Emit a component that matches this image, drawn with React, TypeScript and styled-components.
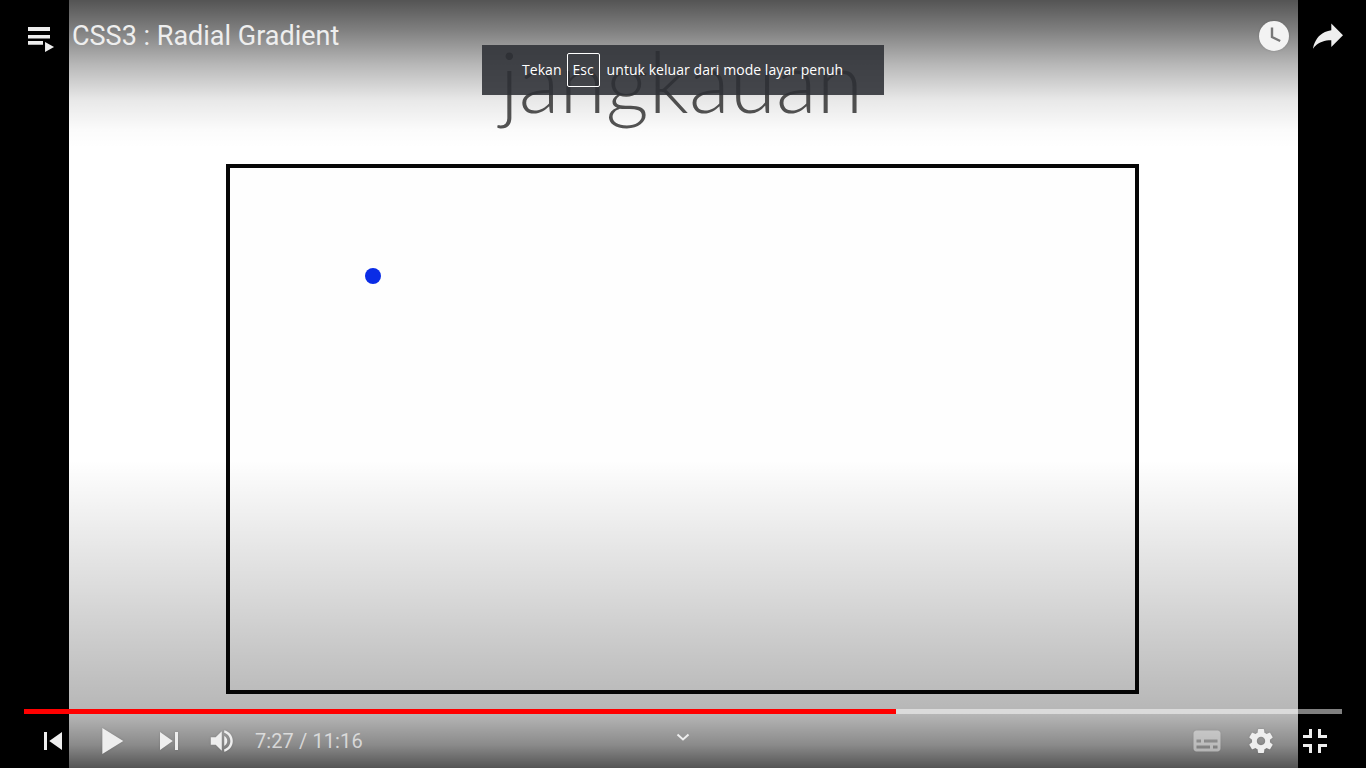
import { FC, ReactNode } from "react";
import styled, { createGlobalStyle } from "styled-components";

const GlobalStyle = createGlobalStyle`
	html, body {
		margin: 0;
		padding: 0;
		width: 100%;
		height: 100%;
		overflow: hidden;
		background: #000;
		font-family: "Roboto", "Liberation Sans", sans-serif;
	}
`;

const Player = styled.div`
	position: relative;
	display: flex;
	width: 1366px;
	height: 768px;
	overflow: hidden;
	background: #000;
`;

const Pillar = styled.div`
	flex: 0 0 ${(props: { $width: number }) => props.$width}px;
	background: #000;
`;

const Frame = styled.div`
	flex: 1;
	display: flex;
	flex-direction: column;
	background: #fff;
`;

const SlideTitle = styled.div`
	height: 164px;
	box-sizing: border-box;
	padding: 29px 0 0 431px;
	font-family: "Lato", "Open Sans", sans-serif;
	font-weight: 300;
	font-size: 84px;
	line-height: 104px;
	letter-spacing: 0.1px;
	color: #555;
	filter: blur(0.6px);
`;

const Canvas = styled.div`
	position: relative;
	box-sizing: border-box;
	width: 913px;
	height: 530px;
	margin-left: 157px;
	border: 4px solid #060606;
	background: #fefefe;
	filter: blur(0.6px);
`;

const Dot = styled.div`
	position: absolute;
	left: 135px;
	top: 100px;
	width: 16px;
	height: 16px;
	border-radius: 50%;
	background: #0a2ce6;
`;

const TopScrim = styled.div`
	position: absolute;
	top: 0;
	left: 0;
	right: 0;
	height: 148px;
	background: linear-gradient(
		to bottom,
		rgba(0, 0, 0, 0.67) 0,
		rgba(0, 0, 0, 0.5) 30px,
		rgba(0, 0, 0, 0.28) 65px,
		rgba(0, 0, 0, 0.09) 100px,
		rgba(0, 0, 0, 0.015) 130px,
		rgba(0, 0, 0, 0) 148px
	);
`;

const BottomScrim = styled.div`
	position: absolute;
	bottom: 0;
	left: 0;
	right: 0;
	height: 308px;
	background: linear-gradient(
		to bottom,
		rgba(0, 0, 0, 0) 0,
		rgba(0, 0, 0, 0.14) 130px,
		rgba(0, 0, 0, 0.29) 255px,
		rgba(0, 0, 0, 0.46) 285px,
		rgba(0, 0, 0, 0.67) 308px
	);
`;

const TopBar = styled.div`
	position: absolute;
	top: 0;
	left: 0;
	right: 0;
	height: 72px;
	display: flex;
	align-items: center;
	padding-left: 14px;
	padding-right: 11px;
`;

const VideoTitle = styled.div`
	flex: 1;
	margin-left: 4px;
	font-size: 27px;
	line-height: 36px;
	color: #eee;
`;

const Toast = styled.div`
	position: absolute;
	top: 45px;
	left: 482px;
	width: 402px;
	height: 50px;
	box-sizing: border-box;
	padding-left: 40px;
	display: flex;
	align-items: center;
	gap: 5px;
	background: rgba(45, 48, 53, 0.88);
	font-family: "Open Sans", "Noto Sans", sans-serif;
	font-size: 14px;
	letter-spacing: 0.06px;
	color: #fff;
	white-space: nowrap;
`;

const ToastText = styled.span`
	padding-bottom: 2px;
`;

const Key = styled.span`
	display: flex;
	align-items: center;
	justify-content: center;
	width: 33px;
	height: 34px;
	box-sizing: border-box;
	margin-right: 2px;
	padding-bottom: 2px;
	border: 1px solid #fff;
	border-radius: 2px;
`;

const Controls = styled.div`
	position: absolute;
	left: 0;
	right: 0;
	bottom: 0;
	padding: 0 24px;
	display: flex;
	flex-direction: column;
`;

const Progress = styled.div`
	height: 5px;
	background: rgba(255, 255, 255, 0.5);
`;

const Played = styled.div`
	height: 100%;
	background: #f00;
`;

const ControlRow = styled.div`
	height: 54px;
	display: flex;
	align-items: center;
`;

const IconSlot = styled.div<{ $width?: number; $dim?: boolean }>`
	flex: 0 0 ${(props) => props.$width ?? 54}px;
	height: 54px;
	display: flex;
	align-items: center;
	justify-content: center;
	opacity: ${(props) => (props.$dim ? 0.5 : 1)};
	filter: drop-shadow(0 0 1px rgba(0, 0, 0, 0.15));
`;

const TimeLabel = styled.div`
	flex: 1;
	margin-left: 5px;
	font-size: 20px;
	letter-spacing: 0.1px;
	color: rgba(255, 255, 255, 0.66);
`;

const Chevron = styled.div`
	position: absolute;
	left: 675px;
	bottom: 26px;
	display: flex;
	width: 16px;
	height: 10px;
`;

const Icon: FC<{ size?: number; box?: number; children: ReactNode }> = ({ size = 54, box = 36, children }) => (
	<svg width={size} height={size} viewBox={`0 0 ${box} ${box}`} fill="#eee" style={{ flex: "none" }}>
		{children}
	</svg>
);

const TOTAL_SECONDS = 676;
const CURRENT_SECONDS = 447;

const App: FC = () => {
	const played = (CURRENT_SECONDS / TOTAL_SECONDS) * 100;

	return (
		<Player>
			<GlobalStyle />
			<Pillar $width={69} />
			<Frame>
				<SlideTitle>jangkauan</SlideTitle>
				<Canvas>
					<Dot />
				</Canvas>
			</Frame>
			<Pillar $width={68} />

			<TopScrim />
			<BottomScrim />

			<TopBar>
				<IconSlot $width={54}>
					<Icon size={54}>
						<path d="M9.33 12H24v2.6H9.33zM9.33 17.3H24v2.4H9.33zM9.33 21.3h10v2.6h-10zM20.7 22l6 3.3-6 3.4z" />
					</Icon>
				</IconSlot>
				<VideoTitle>CSS3 : Radial Gradient</VideoTitle>
				<IconSlot $width={54}>
					<Icon size={36}>
						<circle cx="18" cy="18" r="15" fill="#f3f3f3" />
						<path d="M16 9.5V19l8.2 4" fill="none" stroke="#777" strokeWidth="2.4" />
					</Icon>
				</IconSlot>
				<IconSlot $width={54}>
					<Icon size={54}>
						<path d="m 20.20,14.19 0,-4.45 7.79,7.79 -7.79,7.79 0,-4.56 C 16.27,20.69 12.10,21.81 9.34,24.76 8.80,25.13 7.60,27.29 8.12,25.65 9.08,21.32 11.80,17.18 15.98,15.38 c 1.33,-0.60 2.76,-0.98 4.21,-1.19 z" />
					</Icon>
				</IconSlot>
			</TopBar>

			<Toast>
				<ToastText>Tekan</ToastText>
				<Key>Esc</Key>
				<ToastText>untuk keluar dari mode layar penuh</ToastText>
			</Toast>

			<Controls>
				<Progress>
					<Played style={{ width: `${played}%` }} />
				</Progress>
				<ControlRow>
					<IconSlot $width={58}>
						<Icon>
							<path d="m 12,12 h 2 v 12 h -2 z m 3.5,6 8.5,6 V 12 z" />
						</Icon>
					</IconSlot>
					<IconSlot $width={60}>
						<Icon size={58}>
							<path d="M 12,26 18.5,22 18.5,14 12,10 z M 18.5,22 25,18 25,18 18.5,14 z" />
						</Icon>
					</IconSlot>
					<IconSlot>
						<Icon>
							<path d="M 12,24 20.5,18 12,12 V 24 z M 22,12 v 12 h 2 V 12 h -2 z" />
						</Icon>
					</IconSlot>
					<IconSlot>
						<Icon size={44}>
							<path d="M8,21 L12,21 L17,26 L17,10 L12,15 L8,15 L8,21 Z M19,14 L19,22 C20.48,21.32 21.5,19.77 21.5,18 C21.5,16.26 20.48,14.74 19,14 ZM19,11.29 C21.89,12.15 24,14.83 24,18 C24,21.17 21.89,23.85 19,24.71 L19,26.77 C23.01,25.86 26,22.28 26,18 C26,13.72 23.01,10.14 19,9.23 L19,11.29 Z" />
						</Icon>
					</IconSlot>
					<TimeLabel>7:27 / 11:16</TimeLabel>
					<IconSlot $dim>
						<Icon>
							<path
								fillRule="evenodd"
								d="M11,11 C9.89,11 9,11.9 9,13 L9,23 C9,24.1 9.89,25 11,25 L25,25 C26.1,25 27,24.1 27,23 L27,13 C27,11.9 26.1,11 25,11 L11,11 Z M11,17 L14,17 L14,19 L11,19 L11,17 Z M20,23 L11,23 L11,21 L20,21 L20,23 Z M25,23 L22,23 L22,21 L25,21 L25,23 Z M25,19 L16,19 L16,17 L25,17 L25,19 Z"
							/>
						</Icon>
					</IconSlot>
					<IconSlot>
						<Icon>
							<path d="m 23.94,18.78 c .03,-0.25 .05,-0.51 .05,-0.78 0,-0.27 -0.02,-0.52 -0.05,-0.78 l 1.68,-1.32 c .15,-0.12 .19,-0.33 .09,-0.51 l -1.6,-2.76 c -0.09,-0.17 -0.31,-0.24 -0.48,-0.17 l -1.99,.8 c -0.41,-0.32 -0.86,-0.58 -1.35,-0.78 l -0.30,-2.12 c -0.02,-0.19 -0.19,-0.33 -0.39,-0.33 l -3.2,0 c -0.2,0 -0.36,.14 -0.39,.33 l -0.30,2.12 c -0.48,.2 -0.93,.47 -1.35,.78 l -1.99,-0.8 c -0.18,-0.07 -0.39,0 -0.48,.17 l -1.6,2.76 c -0.10,.17 -0.05,.39 .09,.51 l 1.68,1.32 c -0.03,.25 -0.05,.52 -0.05,.78 0,.26 .02,.52 .05,.78 l -1.68,1.32 c -0.15,.12 -0.19,.33 -0.09,.51 l 1.6,2.76 c .09,.17 .31,.24 .48,.17 l 1.99,-0.8 c .41,.32 .86,.58 1.35,.78 l .30,2.12 c .02,.19 .19,.33 .39,.33 l 3.2,0 c .2,0 .36,-0.14 .39,-0.33 l .30,-2.12 c .48,-0.2 .93,-0.47 1.35,-0.78 l 1.99,.8 c .18,.07 .39,0 .48,-0.17 l 1.6,-2.76 c .09,-0.17 .05,-0.39 -0.09,-0.51 l -1.68,-1.32 0,0 z m -5.94,2.01 c -1.54,0 -2.8,-1.25 -2.8,-2.8 0,-1.54 1.25,-2.8 2.8,-2.8 1.54,0 2.8,1.25 2.8,2.8 0,1.54 -1.25,2.8 -2.8,2.8 l 0,0 z" />
						</Icon>
					</IconSlot>
					<IconSlot>
						<Icon>
							<path d="m 14,14 -4,0 0,2 6,0 0,-6 -2,0 0,4 0,0 z" />
							<path d="m 22,14 0,-4 -2,0 0,6 6,0 0,-2 -4,0 0,0 z" />
							<path d="m 20,26 2,0 0,-4 4,0 0,-2 -6,0 0,6 0,0 z" />
							<path d="m 10,22 4,0 0,4 2,0 0,-6 -6,0 0,2 0,0 z" />
						</Icon>
					</IconSlot>
				</ControlRow>
				<Chevron>
					<svg width="16" height="10" viewBox="0 0 16 10">
						<path d="M2.5 2.5 8 7.5l5.5-5" fill="none" stroke="#eee" strokeWidth="2" />
					</svg>
				</Chevron>
			</Controls>
		</Player>
	);
};

export default App;
